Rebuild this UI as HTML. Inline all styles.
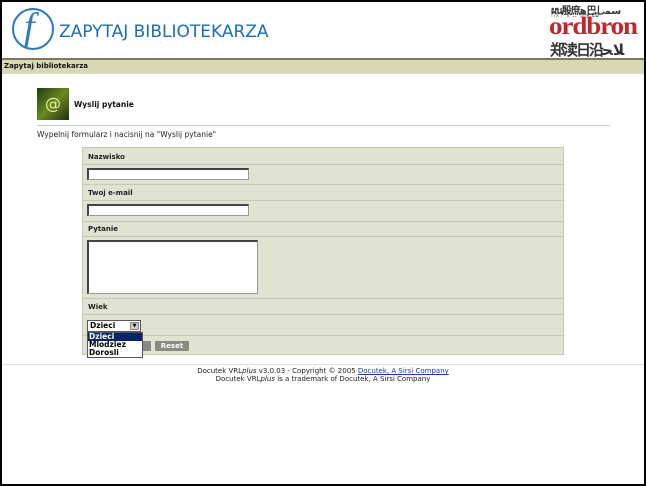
<!DOCTYPE html>
<html><head><meta charset="utf-8"><style>
*{margin:0;padding:0;box-sizing:border-box}
body{width:646px;height:486px;background:#000;position:relative;overflow:hidden;font-family:Verdana,"DejaVu Sans",sans-serif;}
#pg{position:absolute;left:2px;top:2px;width:642px;height:482px;background:#fff;overflow:hidden}
.a{position:absolute}
.lab{position:absolute;left:5px;font-size:7px;font-weight:bold;color:#222}
.inp{position:absolute;background:#fff;border:1px solid #999;border-top:2px solid #444;border-left:2px solid #444}
.sep{position:absolute;left:0;width:100%;height:1px;background:#c8cab8}
</style></head><body><div id="pg">
<div class="a" style="left:10px;top:6px;width:42px;height:42px;border:2px solid #2a7abf;border-radius:50%"></div>
<div class="a" style="left:22px;top:4px;font-family:'Liberation Serif',serif;font-style:italic;font-size:38px;color:#2a7abf;line-height:42px">f</div>
<div class="a" style="left:57px;top:20px;font-family:'DejaVu Sans',sans-serif;font-size:17px;color:#1a6eb5;letter-spacing:0px">ZAPYTAJ BIBLIOTEKARZA</div>
<div class="a" style="left:546px;top:0;width:96px;height:56px;background:#fff;overflow:hidden">
<div class="a" style="left:3px;top:0;font-size:10px;font-weight:bold;color:#333;white-space:nowrap;letter-spacing:-1px">ผน殷庶ﻫ巴しﺳﻤ</div>
<div class="a" style="left:3px;top:9px;font-size:7px;color:#333;white-space:nowrap">ᚢᛟᛚ ᛝ ::  ⟿ ٤٥</div>
<div class="a" style="left:1px;top:11px;font-family:'Liberation Serif',serif;font-weight:bold;font-size:25px;color:#c0272d;letter-spacing:-1px;transform:scaleX(1.08);transform-origin:left">ordbron</div>
<div class="a" style="left:2px;top:37px;font-size:15px;font-weight:bold;color:#333;white-space:nowrap;letter-spacing:-2px">郑渎日沿ﻼﺤ</div>
</div>
<div class="a" style="left:0;top:56px;width:642px;height:16px;background:#d8d7b6;border-top:2px solid #7b7a5a;font-size:7px;font-weight:bold;line-height:13px;padding-left:2px;color:#111">Zapytaj bibliotekarza</div>
<div class="a" style="left:35px;top:86px;width:32px;height:32px;background:linear-gradient(135deg,#1e3a10,#6a8a20 50%,#203010);"><span style="position:absolute;left:8px;top:6px;color:#e8f0a0;font-size:16px">@</span></div>
<div class="a" style="left:72px;top:98px;font-size:7.5px;font-weight:bold;color:#111">Wyslij pytanie</div>
<div class="a" style="left:35px;top:123px;width:573px;height:1px;background:#ccc"></div>
<div class="a" style="left:35px;top:128px;font-size:7.5px;color:#222">Wypelnij formularz i nacisnij na "Wyslij pytanie"</div>
<div class="a" style="left:80px;top:145px;width:482px;height:208px;background:#e0e2d2;border:1px solid #c8cab8">
<div class="lab" style="top:5px">Nazwisko</div>
<div class="sep" style="top:16px"></div>
<div class="inp" style="left:4px;top:20px;width:162px;height:12px"></div>
<div class="sep" style="top:36px"></div>
<div class="lab" style="top:41px">Twoj e-mail</div>
<div class="sep" style="top:52px"></div>
<div class="inp" style="left:4px;top:56px;width:162px;height:12px"></div>
<div class="sep" style="top:73px"></div>
<div class="lab" style="top:77px">Pytanie</div>
<div class="sep" style="top:88px"></div>
<div class="inp" style="left:4px;top:92px;width:171px;height:54px"></div>
<div class="sep" style="top:150px"></div>
<div class="lab" style="top:155px">Wiek</div>
<div class="sep" style="top:166px"></div>
<div class="a" style="left:4px;top:172px;width:54px;height:12px;background:#fff;border:1px solid #555;font-size:7.5px;font-weight:bold;padding-left:2px;line-height:10px">Dzieci
<div class="a" style="right:1px;top:1px;width:9px;height:8px;background:#ccc;border:1px solid #888;font-size:5px;line-height:6px;text-align:center">▼</div></div>
<div class="sep" style="top:187px"></div>
<div class="a" style="left:50px;top:193px;width:18px;height:10px;background:#8a8a80"></div>
<div class="a" style="left:72px;top:193px;width:34px;height:10px;background:#8a8a80;color:#fff;font-size:7px;font-weight:bold;text-align:center;line-height:10px">Reset</div>
<div class="a" style="left:4px;top:184px;width:56px;height:26px;background:#fff;border:1px solid #555;font-size:7.5px;font-weight:bold;line-height:8px">
<div style="background:#0a246a;color:#fff;padding-left:1px">Dzieci</div>
<div style="padding-left:1px">Mlodziez</div>
<div style="padding-left:1px">Dorosli</div></div>
</div>
<div class="a" style="left:0;top:362px;width:642px;height:1px;background:#e0e0e0"></div>
<div class="a" style="left:0;top:365px;width:642px;text-align:center;font-size:7px;color:#222;line-height:8px">Docutek VRL<i>plus</i> v3.0.03 - Copyright © 2005 <span style="color:#1a3aa8;text-decoration:underline">Docutek, A Sirsi Company</span><br>Docutek VRL<i>plus</i> is a trademark of Docutek, A Sirsi Company</div>
</div></body></html>
